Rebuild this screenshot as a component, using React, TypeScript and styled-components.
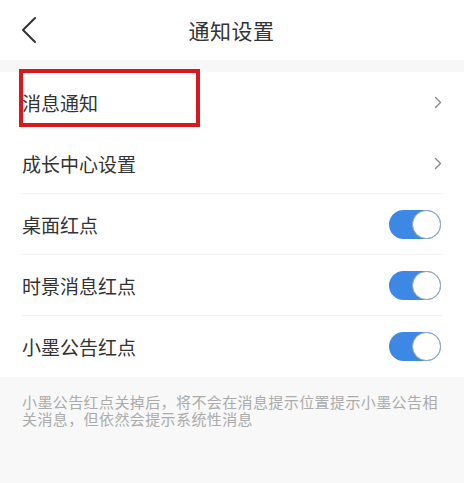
import React, { FC, useState } from 'react';
import styled, { createGlobalStyle } from 'styled-components';

const GlobalStyle = createGlobalStyle`
  html, body {
    margin: 0;
    padding: 0;
    background: #ffffff;
  }
  body {
    font-family: "Noto Sans CJK SC", "Noto Sans", sans-serif;
    -webkit-font-smoothing: antialiased;
  }
`;

interface RowItem {
  id: string;
  label: string;
  kind: 'link' | 'switch';
  divider: boolean;
}

const rows: RowItem[] = [
  { id: 'msg', label: '消息通知', kind: 'link', divider: false },
  { id: 'growth', label: '成长中心设置', kind: 'link', divider: true },
  { id: 'desktop', label: '桌面红点', kind: 'switch', divider: true },
  { id: 'moment', label: '时景消息红点', kind: 'switch', divider: true },
  { id: 'notice', label: '小墨公告红点', kind: 'switch', divider: false },
];

const Toggle: FC<{ initial?: boolean }> = ({ initial = true }) => {
  const [on, setOn] = useState(initial);
  return (
    <Track on={on} onClick={() => setOn(v => !v)}>
      <Knob on={on} />
    </Track>
  );
};

const App: FC = () => {
  return (
    <>
      <GlobalStyle />
      <Page>
        <Header>
          <BackButton>
            <svg width="16" height="28" viewBox="0 0 16 28" fill="none">
              <path d="M14 2 L2 14 L14 26" stroke="#333333" strokeWidth="2" strokeLinecap="round" strokeLinejoin="round" />
            </svg>
          </BackButton>
          <Title>通知设置</Title>
        </Header>
        <Band />
        <List>
          {rows.map(row => (
            <Row key={row.id} divider={row.divider}>
              <Label>{row.label}</Label>
              {row.kind === 'link' ? (
                <Chevron>
                  <svg width="8" height="13" viewBox="0 0 8 13" fill="none">
                    <path d="M1.5 1.5 L6.5 6.5 L1.5 11.5" stroke="#888888" strokeWidth="1.4" strokeLinecap="round" strokeLinejoin="round" />
                  </svg>
                </Chevron>
              ) : (
                <Toggle />
              )}
              {row.id === 'msg' && <Highlight />}
            </Row>
          ))}
        </List>
        <Footer>
          <Hint>小墨公告红点关掉后，将不会在消息提示位置提示小墨公告相关消息，但依然会提示系统性消息</Hint>
        </Footer>
      </Page>
    </>
  );
};

export default App;

const Page = styled.div`
  width: 464px;
  height: 483px;
  display: flex;
  flex-direction: column;
  background: #ffffff;
  overflow: hidden;
`;

const Header = styled.div`
  position: relative;
  height: 60px;
  display: flex;
  align-items: center;
  justify-content: center;
  flex-shrink: 0;
`;

const BackButton = styled.div`
  position: absolute;
  left: 21px;
  top: 16px;
  display: flex;
`;

const Title = styled.div`
  font-size: 21px;
  color: #333333;
  letter-spacing: 0.5px;
  margin-left: -1px;
`;

const Band = styled.div`
  height: 12px;
  background: #f7f7f7;
  flex-shrink: 0;
`;

const List = styled.div`
  display: flex;
  flex-direction: column;
  padding: 0 22px;
`;

interface RowProps {
  divider: boolean;
}

const Row = styled.div<RowProps>`
  position: relative;
  height: 61px;
  box-sizing: border-box;
  display: flex;
  align-items: center;
  justify-content: space-between;
  border-bottom: 1px solid ${({ divider }) => (divider ? '#f1f1f1' : 'transparent')};
`;

const Label = styled.div`
  font-size: 19px;
  color: #333333;
`;

const Chevron = styled.div`
  display: flex;
  margin-right: 0;
`;

const Highlight = styled.div`
  position: absolute;
  left: -3px;
  top: -3px;
  width: 181px;
  height: 58px;
  box-sizing: border-box;
  border: 4px solid #d7191c;
  pointer-events: none;
`;

interface SwitchProps {
  on: boolean;
}

const Track = styled.div<SwitchProps>`
  position: relative;
  width: 52px;
  height: 29px;
  border-radius: 15px;
  background: ${({ on }) => (on ? '#3d88e5' : '#e5e5e5')};
  cursor: pointer;
  margin-right: 1px;
`;

const Knob = styled.div<SwitchProps>`
  position: absolute;
  top: 0;
  left: ${({ on }) => (on ? '23px' : '0')};
  width: 29px;
  height: 29px;
  box-sizing: border-box;
  border-radius: 50%;
  background: #ffffff;
  border: 1px solid #9aa3ad;
`;

const Footer = styled.div`
  flex: 1;
  background: #f8f8f8;
  padding: 16px 20px 0 22px;
`;

const Hint = styled.div`
  font-size: 15px;
  letter-spacing: 0.4px;
  line-height: 17px;
  color: #ababab;
`;
